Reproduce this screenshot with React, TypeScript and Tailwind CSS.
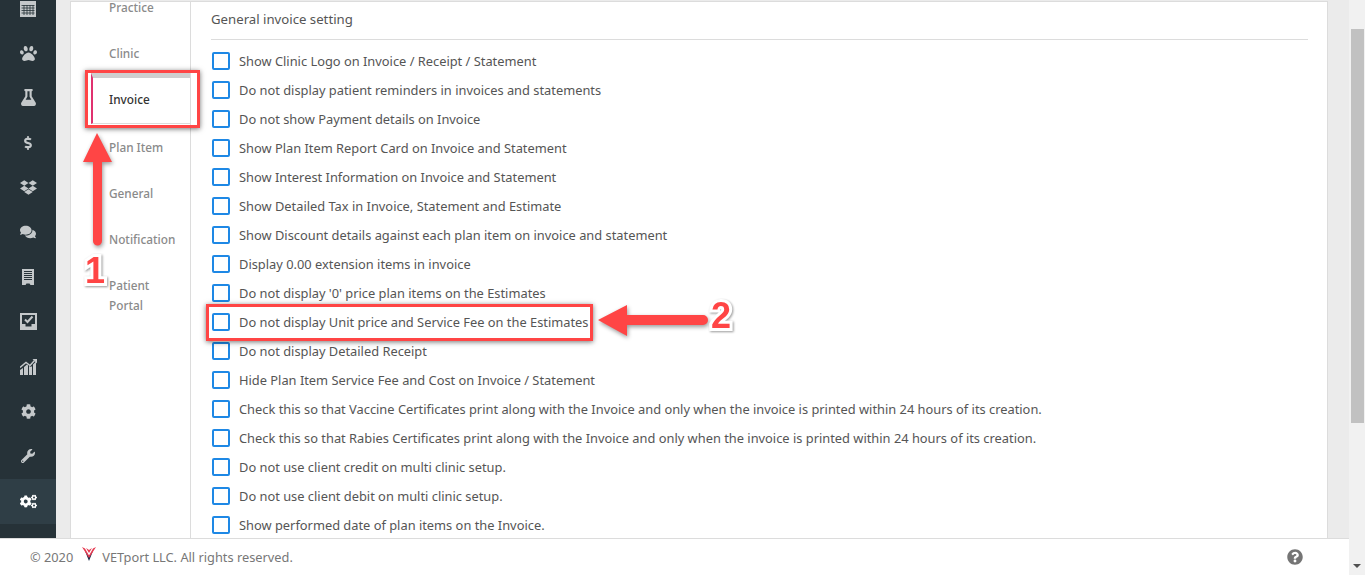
import { FaCog, FaCogs, FaComments, FaDollarSign, FaDropbox, FaFlask, FaPaw, FaQuestionCircle, FaWrench } from 'react-icons/fa';
import type { ReactNode } from 'react';

const SETTINGS = [
  'Show Clinic Logo on Invoice / Receipt / Statement',
  'Do not display patient reminders in invoices and statements',
  'Do not show Payment details on Invoice',
  'Show Plan Item Report Card on Invoice and Statement',
  'Show Interest Information on Invoice and Statement',
  'Show Detailed Tax in Invoice, Statement and Estimate',
  'Show Discount details against each plan item on invoice and statement',
  'Display 0.00 extension items in invoice',
  "Do not display '0' price plan items on the Estimates",
  'Do not display Unit price and Service Fee on the Estimates',
  'Do not display Detailed Receipt',
  'Hide Plan Item Service Fee and Cost on Invoice / Statement',
  'Check this so that Vaccine Certificates print along with the Invoice and only when the invoice is printed within 24 hours of its creation.',
  'Check this so that Rabies Certificates print along with the Invoice and only when the invoice is printed within 24 hours of its creation.',
  'Do not use client credit on multi clinic setup.',
  'Do not use client debit on multi clinic setup.',
  'Show performed date of plan items on the Invoice.',
];

function CalendarIcon() {
  return (
    <svg viewBox="0 0 16 18" className="h-[18px] w-4" fill="currentColor">
      <path d="M0 2h16v16H0z" />
      <path d="M1.500 6.500h13M1.500 9h13M1.500 11.500h13M1.500 14h13M4 6v10M7 6v10M10 6v10M13 6v10" stroke="#263238" strokeWidth="0.8" />
    </svg>
  );
}

function ReceiptIcon() {
  return (
    <svg viewBox="0 0 14 16" className="h-4 w-3.5" fill="currentColor">
      <path d="M1 0h12v16H9.500l-1-1.500h-3l-1 1.500H1z" />
      <path d="M3 2.500h8M3 4.500h8M3 6.500h8M3 8.500h8M3 10.500h8" stroke="#263238" strokeWidth="1" />
    </svg>
  );
}

function ChecklistIcon() {
  return (
    <svg viewBox="0 0 17 17" className="h-[17px] w-[17px]" fill="currentColor">
      <path d="M0 0h17v17H0z" />
      <path d="M2 2h13v9h-3.500v2.500h-6V11H2z" fill="#263238" />
      <path d="M5 6.500l2.500 2.500L12.500 3.500" fill="none" stroke="currentColor" strokeWidth="2" />
    </svg>
  );
}

function ChartIcon() {
  return (
    <svg viewBox="0 0 17 16" className="h-4 w-[17px]" fill="currentColor">
      <path d="M0 16v-5l3-2v7zM4 16V8l3-2.500 1 1V16zM9 16V7l2 1 1-1v9zM13 16V5.500l3-3V16z" />
      <path d="M0 8.500 6 3.500l4 3 4.500-5" fill="none" stroke="currentColor" strokeWidth="1.400" />
      <path d="M12.500 0H17v4.500z" />
    </svg>
  );
}

const NAV_ICONS: ReactNode[] = [
  <CalendarIcon key="calendar" />,
  <FaPaw key="paw" size={17} />,
  <FaFlask key="flask" size={17} />,
  <FaDollarSign key="dollar" size={14} />,
  <FaDropbox key="dropbox" size={17} />,
  <FaComments key="comments" size={16} />,
  <ReceiptIcon key="receipt" />,
  <ChecklistIcon key="check" />,
  <ChartIcon key="chart" />,
  <FaCog key="cog" size={15} />,
  <FaWrench key="wrench" size={14} />,
  <FaCogs key="cogs" size={17} />,
];

function Sidebar() {
  return (
    <aside className="w-14 shrink-0 bg-[#263238] text-[#c4c8ca]">
      <div className="-mt-[14px] flex flex-col">
        {NAV_ICONS.map((icon, i) => (
          <div
            key={i}
            className={`flex h-[44.8px] items-center justify-center ${i === 11 ? 'bg-[#2f3e46] text-white' : ''}`}
          >
            {icon}
          </div>
        ))}
      </div>
    </aside>
  );
}

function SubNav() {
  const item = 'whitespace-nowrap px-[38px] text-[11.8px] font-medium leading-5 text-[#8a8a8a]';
  return (
    <nav className="relative w-[120px] shrink-0 border-r border-[#dcdcdc]">
      <div className={`${item} mt-[-5px]`}>Practice</div>
      <div className={`${item} mt-[26px]`}>Clinic</div>
      <div className="ml-5 mt-[10px] h-[51px] border-b border-l-2 border-t-[5px] border-b-[#dcdcdc] border-l-[#e0316f] border-t-[#cfcfcf] pl-4 pt-[11px] text-[11.8px] font-medium leading-5 text-[#333]">
        Invoice
      </div>
      <div className={`${item} mt-[13px]`}>Plan Item</div>
      <div className={`${item} mt-[26px]`}>General</div>
      <div className={`${item} mt-[26px]`}>Notification</div>
      <div className={`${item} mt-[26px]`}>
        Patient
        <br />
        Portal
      </div>
    </nav>
  );
}

function SettingRow({ label }: { label: string }) {
  return (
    <label className="flex h-[29px] items-center pl-px">
      <span className="mr-[9px] h-[18px] w-[18px] shrink-0 rounded-[2px] border-2 border-[#1e88e5] bg-white" />
      <span className="whitespace-nowrap pt-[3px] text-[12.85px] text-[#555]">{label}</span>
    </label>
  );
}

function Annotations() {
  return (
    <>
      <div className="absolute left-[85px] top-[70px] h-[58px] w-[115px] border-[3px] border-[#ff4545] shadow-[0_1px_5px_rgba(0,0,0,0.55)]" />
      <div className="absolute left-[206px] top-[304px] h-[37px] w-[387px] border-[3px] border-[#ff4545] shadow-[0_1px_5px_rgba(0,0,0,0.55)]" />
      <svg className="absolute left-0 top-0 h-[575px] w-[1365px] drop-shadow-[1px_2px_2px_rgba(0,0,0,0.4)]" viewBox="0 0 1365 575">
        <path d="M97 133l15 29h-10v79a4.500 4.500 0 0 1-9 0v-79H83z" fill="#ff4545" />
        <path d="M598 320l29-15v10h76a5 5 0 0 1 0 10h-76v11z" fill="#ff4545" />
      </svg>
      <span className="absolute left-[85px] top-[251px] font-['Liberation_Sans',sans-serif] text-[36px] font-bold leading-10 text-[#ff4545] [-webkit-text-stroke:6px_white] [paint-order:stroke_fill] drop-shadow-[1px_1px_1px_rgba(0,0,0,0.4)]">
        1
      </span>
      <span className="absolute left-[711px] top-[296px] font-['Liberation_Sans',sans-serif] text-[36px] font-bold leading-10 text-[#ff4545] [-webkit-text-stroke:6px_white] [paint-order:stroke_fill] drop-shadow-[1px_1px_1px_rgba(0,0,0,0.4)]">
        2
      </span>
    </>
  );
}

export default function App() {
  return (
    <div className="relative flex h-[575px] w-[1365px] overflow-hidden bg-white font-['Noto_Sans',sans-serif]">
      <div className="flex min-w-0 flex-1 flex-col">
        <div className="flex h-[538px] overflow-hidden">
          <Sidebar />
          <main className="flex flex-1 overflow-hidden bg-[#ebebeb] pl-[14px] pr-[21px]">
            <div className="mt-px flex flex-1 border-l border-r border-t border-[#dcdcdc] bg-white">
              <SubNav />
              <section className="flex-1 pl-5 pr-[19px]">
                <h2 className="flex h-[38px] items-center border-b border-[#dcdcdc] pb-[2px] text-[13.2px] font-normal text-[#555]">
                  General invoice setting
                </h2>
                <div className="mt-[6px]">
                  {SETTINGS.map((label) => (
                    <SettingRow key={label} label={label} />
                  ))}
                </div>
              </section>
            </div>
          </main>
        </div>
        <footer className="flex h-[37px] items-center border-t border-[#dcdcdc] bg-white pl-[30px] pr-[46px] text-[12.8px] text-[#777]">
          <span className="pt-[2px]">© 2020</span>
          <svg viewBox="0 0 14 14" className="mb-[6px] ml-[9px] mr-[6px] h-[14px] w-[14px]">
            <path d="M3 4l4 10 4-10-4 5z" fill="#1b2a4a" />
            <path d="M0 0l3 1.500 4 7 4-7L14 0 7 11z" fill="#e53950" />
            <path d="M4 1l3 5 3-5-3 2z" fill="#e53950" />
          </svg>
          <span className="pt-[2px]">VETport LLC. All rights reserved.</span>
          <FaQuestionCircle size={16} className="ml-auto text-[#757575]" />
        </footer>
      </div>
      <div className="relative w-4 shrink-0 bg-[#f1f1f1]">
        <div className="ml-[2px] mt-[29px] h-[394px] w-[13px] bg-[#c1c1c1]" />
        <div className="absolute bottom-[7px] left-[4px] h-0 w-0 border-x-4 border-t-4 border-x-transparent border-t-[#505050]" />
      </div>
      <Annotations />
    </div>
  );
}
